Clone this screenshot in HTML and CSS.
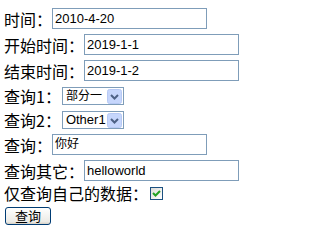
FILE: index.html
```html
<!DOCTYPE html>
<html>
<head>
<meta charset="utf-8">
<link rel="stylesheet" href="styles.css">
</head>
<body>
<form class="form">
  <div class="row r-input">
    <span class="label">时间：</span>
    <span class="field">2010-4-20</span>
  </div>
  <div class="row r-input">
    <span class="label">开始时间：</span>
    <span class="field">2019-1-1</span>
  </div>
  <div class="row r-input">
    <span class="label">结束时间：</span>
    <span class="field">2019-1-2</span>
  </div>
  <div class="row r-select first-select">
    <span class="label">查询1：</span>
    <span class="select"><span class="sel-text cjk">部分一</span><span class="sel-arrow"><svg width="15" height="15" viewBox="0 0 15 15"><rect x="0.5" y="0.5" width="14" height="14" rx="2" fill="#c6d6fc" stroke="#b7c9f4"/><path d="M4 6 L7.5 9.5 L11 6" fill="none" stroke="#4d6185" stroke-width="2"/></svg></span></span>
  </div>
  <div class="row r-select">
    <span class="label">查询2：</span>
    <span class="select"><span class="sel-text">Other1</span><span class="sel-arrow"><svg width="15" height="15" viewBox="0 0 15 15"><rect x="0.5" y="0.5" width="14" height="14" rx="2" fill="#c6d6fc" stroke="#b7c9f4"/><path d="M4 6 L7.5 9.5 L11 6" fill="none" stroke="#4d6185" stroke-width="2"/></svg></span></span>
  </div>
  <div class="row r-input after-select">
    <span class="label">查询：</span>
    <span class="field cjk">你好</span>
  </div>
  <div class="row r-input">
    <span class="label">查询其它：</span>
    <span class="field">helloworld</span>
  </div>
  <div class="row r-check">
    <span class="label">仅查询自己的数据：</span>
    <span class="check"><svg width="11" height="11" viewBox="0 0 11 11"><path d="M2 5 L4.5 7.5 L9 3" fill="none" stroke="#21a121" stroke-width="2"/></svg></span>
  </div>
  <div class="row r-button">
    <span class="button">查询</span>
  </div>
</form>
</body>
</html>
```
FILE: styles.css
```css
html, body {
  margin: 0;
  padding: 0;
  background: #ffffff;
}
body {
  font-family: "Noto Sans CJK SC", "Liberation Sans", sans-serif;
  color: #000000;
}
.form {
  display: flex;
  flex-direction: column;
  padding: 8px 0 0 4px;
}
.row {
  display: flex;
  align-items: center;
}
.label {
  font-size: 16px;
  line-height: 16px;
  white-space: nowrap;
}
.r-input {
  height: 21px;
  margin-bottom: 5px;
}
.field {
  box-sizing: border-box;
  width: 155px;
  height: 21px;
  border: 1px solid #7f9db9;
  padding: 0 2px;
  font-family: "Liberation Sans", "Noto Sans CJK SC", sans-serif;
  font-size: 13px;
  line-height: 19px;
  display: flex;
  align-items: center;
}
.cjk {
  font-size: 12px;
}
.r-select {
  height: 18px;
  margin-bottom: 6px;
}
.first-select {
  margin-top: 1px;
}
.after-select {
  margin-top: -1px;
}
.select {
  box-sizing: border-box;
  width: 62px;
  height: 18px;
  margin-left: 1px;
  border: 1px solid #7f9db9;
  display: flex;
  align-items: center;
  justify-content: space-between;
  font-family: "Liberation Sans", "Noto Sans CJK SC", sans-serif;
  font-size: 13px;
}
.sel-text {
  padding-left: 3px;
  line-height: 16px;
}
.sel-arrow {
  display: flex;
  margin-right: 1px;
}
.r-check {
  height: 14px;
  margin-bottom: 7px;
}
.check {
  box-sizing: border-box;
  width: 13px;
  height: 13px;
  margin-left: 2px;
  border: 1px solid #1c5180;
  background: linear-gradient(135deg, #dcdcd7, #ffffff);
  display: flex;
  align-items: center;
  justify-content: center;
}
.button {
  box-sizing: border-box;
  width: 46px;
  height: 18px;
  margin-left: 1px;
  border: 1px solid #003c74;
  border-radius: 3px;
  background: linear-gradient(#ffffff, #ecebe6 85%, #d6d0c5);
  font-size: 13px;
  line-height: 16px;
  display: flex;
  align-items: center;
  justify-content: center;
}
```
